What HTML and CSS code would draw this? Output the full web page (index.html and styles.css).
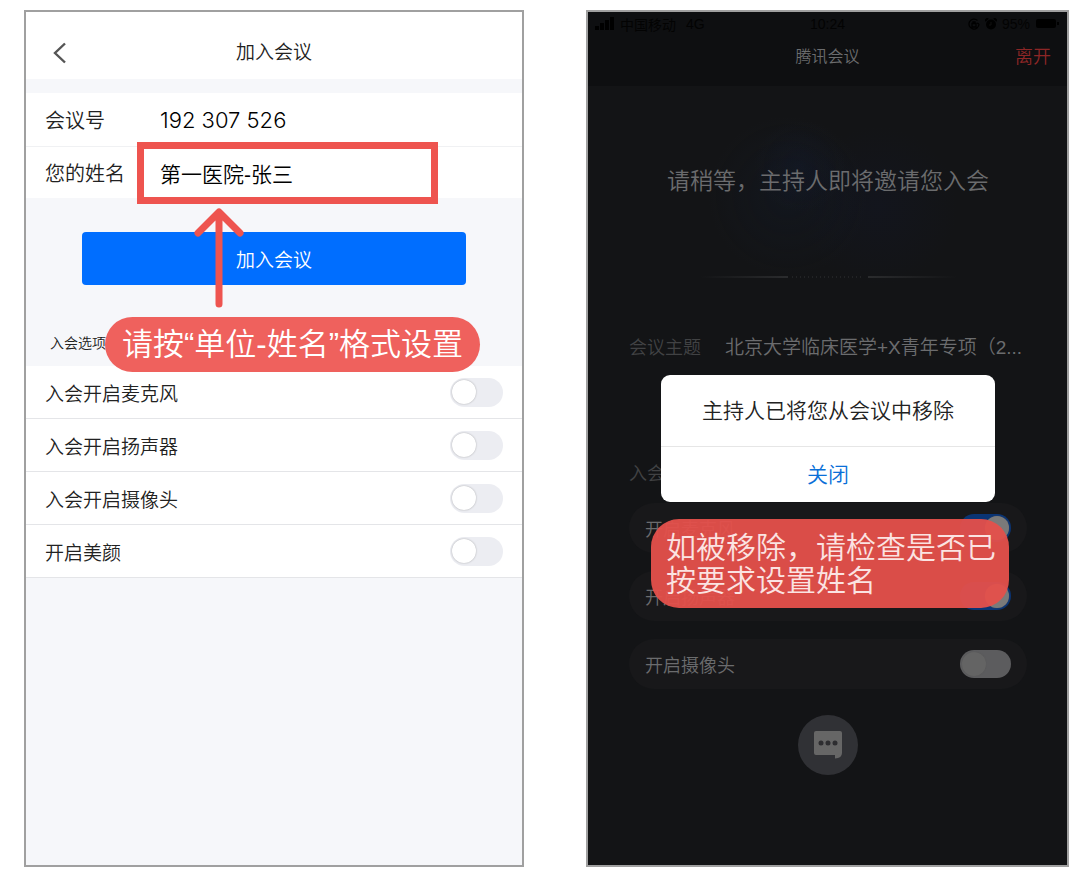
FILE: index.html
```
<!DOCTYPE html>
<html lang="zh-CN">
<head>
    <meta charset="UTF-8">
    <meta name="viewport" content="width=device-width, initial-scale=1.0">
    <title>加入会议</title>
    <link rel="stylesheet" href="styles.css">
</head>
<body>

    <!-- Join form -->
    <main class="phone join">
        <header class="join-header">
            <button class="back" aria-label="返回">
                <svg width="14" height="22" viewBox="0 0 14 22"><path d="M12 1.5 2 11l10 9.500" fill="none" stroke="#555" stroke-width="2.400"/></svg>
            </button>
            <h1>加入会议</h1>
        </header>

        <form class="join-form">
            <div class="fields">
                <div class="field">
                    <label for="meeting-id">会议号</label>
                    <input type="text" id="meeting-id" class="number" value="192 307 526">
                </div>
                <div class="field marked">
                    <label for="name">您的姓名</label>
                    <input type="text" id="name" value="第一医院-张三">
                </div>
            </div>

            <button type="button" class="join-button">加入会议</button>

            <h2>入会选项</h2>
            <div class="options">
                <label class="option">入会开启麦克风<input type="checkbox" class="switch"></label>
                <label class="option">入会开启扬声器<input type="checkbox" class="switch"></label>
                <label class="option">入会开启摄像头<input type="checkbox" class="switch"></label>
                <label class="option">开启美颜<input type="checkbox" class="switch"></label>
            </div>
        </form>

        <svg class="arrow" width="50" height="100" viewBox="0 0 50 100">
            <path d="M25 96V5M4 25 25 4l21 21" fill="none" stroke="#ee544f" stroke-width="7" stroke-linecap="round" stroke-linejoin="round"/>
        </svg>
        <p class="note note-name">请按“单位-姓名”格式设置</p>
    </main>

    <!-- Waiting room -->
    <section class="phone waiting">
        <header class="waiting-header">
            <div class="status">
                <div class="status-side">
                    <svg width="20" height="13" viewBox="0 0 20 13"><path d="M0 9h4v4H0zM5 6h4v7H5zM10 3h4v10h-4zM15 0h4v13h-4z"/></svg>
                    <span>中国移动</span>
                    <span class="network">4G</span>
                </div>
                <span class="time">10:24</span>
                <div class="status-side right">
                    <svg width="12" height="12" viewBox="0 0 12 12"><path d="M9.500 2.500A5 5 0 1 0 11 6M11 6l-2-1M4 5.500h4V9H4zM5 5.500V4h2v1.500" fill="none" stroke="#000" stroke-width="1.300"/></svg>
                    <svg width="12" height="12" viewBox="0 0 12 12"><circle cx="6" cy="6.500" r="5"/><path d="M0 3l3-3M12 3 9 0" stroke="#000" stroke-width="2"/><path d="M6 4v3h-2" stroke="#111" fill="none"/></svg>
                    <span>95%</span>
                    <svg width="25" height="11" viewBox="0 0 25 11"><rect x="1" y="1" width="20" height="9" rx="2"/><path d="M23 4v3" stroke="#000" stroke-width="2"/></svg>
                </div>
            </div>
            <div class="title-bar">
                <h1>腾讯会议</h1>
                <a href="#" class="leave">离开</a>
            </div>
        </header>

        <div class="waiting-body">
            <p class="message">请稍等，主持人即将邀请您入会</p>
            <div class="divider"><i></i><b></b><i></i></div>

            <dl class="topic">
                <dt>会议主题</dt>
                <dd>北京大学临床医学+X青年专项（2...</dd>
            </dl>

            <h2>入会选项</h2>
            <div class="cards">
                <label class="card">开启麦克风<input type="checkbox" class="switch" checked></label>
                <label class="card">开启扬声器<input type="checkbox" class="switch" checked></label>
                <label class="card">开启摄像头<input type="checkbox" class="switch"></label>
            </div>

            <button class="chat" aria-label="聊天">
                <svg width="28" height="28" viewBox="0 0 28 28">
                    <path d="M2 0h24a2 2 0 0 1 2 2v20q0 5-7 5.500V24H2a2 2 0 0 1-2-2V2a2 2 0 0 1 2-2z" fill="#666"/>
                    <g fill="#2d2d30"><circle cx="7" cy="12" r="2.500"/><circle cx="14" cy="12" r="2.500"/><circle cx="21" cy="12" r="2.500"/></g>
                </svg>
            </button>
        </div>

        <div class="dialog" role="dialog">
            <p>主持人已将您从会议中移除</p>
            <button>关闭</button>
        </div>
        <p class="note note-removed">如被移除，请检查是否已<br>按要求设置姓名</p>
    </section>

</body>
</html>
```
FILE: styles.css
```
* {
    box-sizing: border-box;
}

body {
    margin: 0;
    padding: 10px 18px 12px 24px;
    display: flex;
    gap: 62px;
    min-height: 100vh;
    background: #fff;
    font-family: "Liberation Sans", "Noto Sans CJK SC", sans-serif;
    font-weight: 350;
    color: #222;
}

h1, h2, p, dl, dd {
    margin: 0;
    font-weight: inherit;
}

button, input {
    font: inherit;
    color: inherit;
    border: none;
    padding: 0;
    background: none;
}

button, label {
    cursor: pointer;
}

.phone {
    position: relative;
    border: 2px solid #a0a0a0;
}

/* Switches */
.switch {
    appearance: none;
    display: flex;
    align-items: center;
    width: 53px;
    height: 29px;
    margin: 0;
    padding: 0 2px;
    border-radius: 15px;
    background: #ecedf2;
}

.switch::before {
    content: "";
    width: 24px;
    height: 24px;
    border-radius: 50%;
    background: #fff;
    box-shadow: 0 0 2px rgba(0, 0, 0, 0.3);
}

.switch:checked {
    justify-content: flex-end;
}

/* Join form */
.join {
    flex: 500;
    background: #f6f7fa;
}

.join-header {
    display: grid;
    grid-template-columns: 60px 1fr 60px;
    align-items: center;
    height: 67px;
    padding-top: 14px;
    background: #fff;
}

.join-header h1 {
    font-size: 19px;
    line-height: 28px;
    text-align: center;
}

.back {
    display: flex;
    padding-left: 27px;
}

.fields {
    margin-top: 14px;
    background: #fff;
}

.field {
    position: relative;
    display: flex;
    align-items: center;
    height: 53px;
    padding-left: 19px;
}

.field + .field {
    height: 52px;
    border-top: 1px solid #f0f1f3;
}

.field label {
    width: 115px;
    font-size: 20px;
}

.field input {
    flex: 1;
    min-width: 0;
    font-size: 21px;
    color: #000;
    outline: none;
}

.field .number {
    font-family: Inter, sans-serif;
    font-size: 22px;
}

.marked::after {
    content: "";
    box-sizing: border-box;
    position: absolute;
    top: -5px;
    left: 111px;
    right: 84px;
    height: 62px;
    border: 7px solid #ee544f;
    pointer-events: none;
}

.join-button {
    display: block;
    width: calc(100% - 112px);
    height: 53px;
    margin: 34px auto 0;
    border-radius: 4px;
    background: #006eff;
    color: #fff;
    font-size: 19px;
}

.join-form h2 {
    padding: 46px 24px 11px;
    font-size: 14px;
    line-height: 24px;
}

.options {
    background: #fff;
}

.option {
    display: flex;
    align-items: center;
    justify-content: space-between;
    height: 53px;
    padding: 0 19px;
    border-bottom: 1px solid #e4e5e8;
    font-size: 19px;
}

/* Red notes */
.note {
    position: absolute;
    background: rgba(238, 84, 79, 0.92);
    color: #fff;
}

.note-name {
    top: 305px;
    left: 79px;
    padding: 0 17px;
    border-radius: 28px;
    font-size: 31px;
    line-height: 55px;
    white-space: nowrap;
}

.arrow {
    position: absolute;
    top: 196px;
    left: 168px;
}

/* Waiting room */
.waiting {
    flex: 483;
    background: #131416;
    color: #6b6c6e;
}

.waiting-header {
    height: 74px;
    background: #0e0f11;
}

.status {
    display: grid;
    grid-template-columns: 1fr auto 1fr;
    align-items: center;
    height: 23px;
    padding: 0 7px;
    color: #030303;
    font-size: 14px;
    font-weight: 400;
}

.status-side {
    display: flex;
    align-items: center;
    gap: 5px;
}

.status-side.right {
    justify-content: flex-end;
}

.network {
    margin-left: 5px;
}

.title-bar {
    display: grid;
    grid-template-columns: 1fr auto 1fr;
    align-items: center;
    height: 40px;
    padding: 0 16px;
}

.title-bar h1 {
    grid-column: 2;
    font-size: 16px;
}

.leave {
    justify-self: end;
    color: #8c2626;
    font-size: 18px;
    text-decoration: none;
}

.waiting-body {
    padding: 77px 40px 0 41px;
    background:
        radial-gradient(circle at 212px 80px, rgba(20, 36, 90, 0.12), transparent 46px),
        radial-gradient(circle at 200px 110px, rgba(16, 28, 50, 0.25), transparent 80px),
        radial-gradient(circle at 290px 120px, rgba(18, 24, 50, 0.25), transparent 80px);
    font-size: 18px;
}

.message {
    font-size: 23px;
    line-height: 36px;
    text-align: center;
    white-space: nowrap;
}

.divider {
    display: flex;
    justify-content: center;
    gap: 4px;
    margin-top: 77px;
}

.divider i {
    width: 88px;
    height: 2px;
    background: linear-gradient(to right, transparent, #2b2c2e);
}

.divider i:last-child {
    background: linear-gradient(to left, transparent, #2b2c2e);
}

.divider b {
    width: 72px;
    height: 2px;
    background: repeating-linear-gradient(to right, #222325 0 1px, transparent 1px 4px);
}

.topic {
    display: flex;
    gap: 24px;
    margin-top: 56px;
    line-height: 28px;
    white-space: nowrap;
}

.topic dd {
    font-size: 19px;
}

.topic dt, .waiting-body h2 {
    color: #414244;
}

.waiting-body h2 {
    margin-top: 98px;
    font-size: 18px;
    line-height: 28px;
}

.cards {
    display: flex;
    flex-direction: column;
    gap: 18px;
    margin-top: 15px;
}

.card {
    display: flex;
    align-items: center;
    justify-content: space-between;
    height: 50px;
    padding: 0 16px;
    border-radius: 25px;
    background: #18181a;
}

.card .switch {
    width: 51px;
    height: 28px;
    background: #5c5c5e;
}

.card .switch::before {
    background: #646464;
    box-shadow: 0 0 1px #555;
}

.card .switch:checked {
    background: #0a3474;
}

.card .switch:checked::before {
    background: #7a7a7a;
}

.chat {
    display: flex;
    align-items: center;
    justify-content: center;
    width: 60px;
    height: 60px;
    margin: 26px auto 0;
    border-radius: 50%;
    background: #303135;
}

.dialog {
    position: absolute;
    top: 363px;
    left: 73px;
    right: 72px;
    border-radius: 9px;
    background: #fff;
    color: #222;
    font-size: 21px;
    text-align: center;
}

.dialog p {
    line-height: 71px;
    border-bottom: 1px solid #e6e6e6;
    white-space: nowrap;
}

.dialog button {
    width: 100%;
    height: 55px;
    padding-bottom: 3px;
    color: #0a6fd8;
}

.note-removed {
    top: 507px;
    left: 63px;
    right: 58px;
    padding: 12px 15px 11px;
    border-radius: 28px;
    background: rgba(229, 80, 75, 0.95);
    color: #fbe3e2;
    font-size: 30px;
    line-height: 33px;
    white-space: nowrap;
}
```
